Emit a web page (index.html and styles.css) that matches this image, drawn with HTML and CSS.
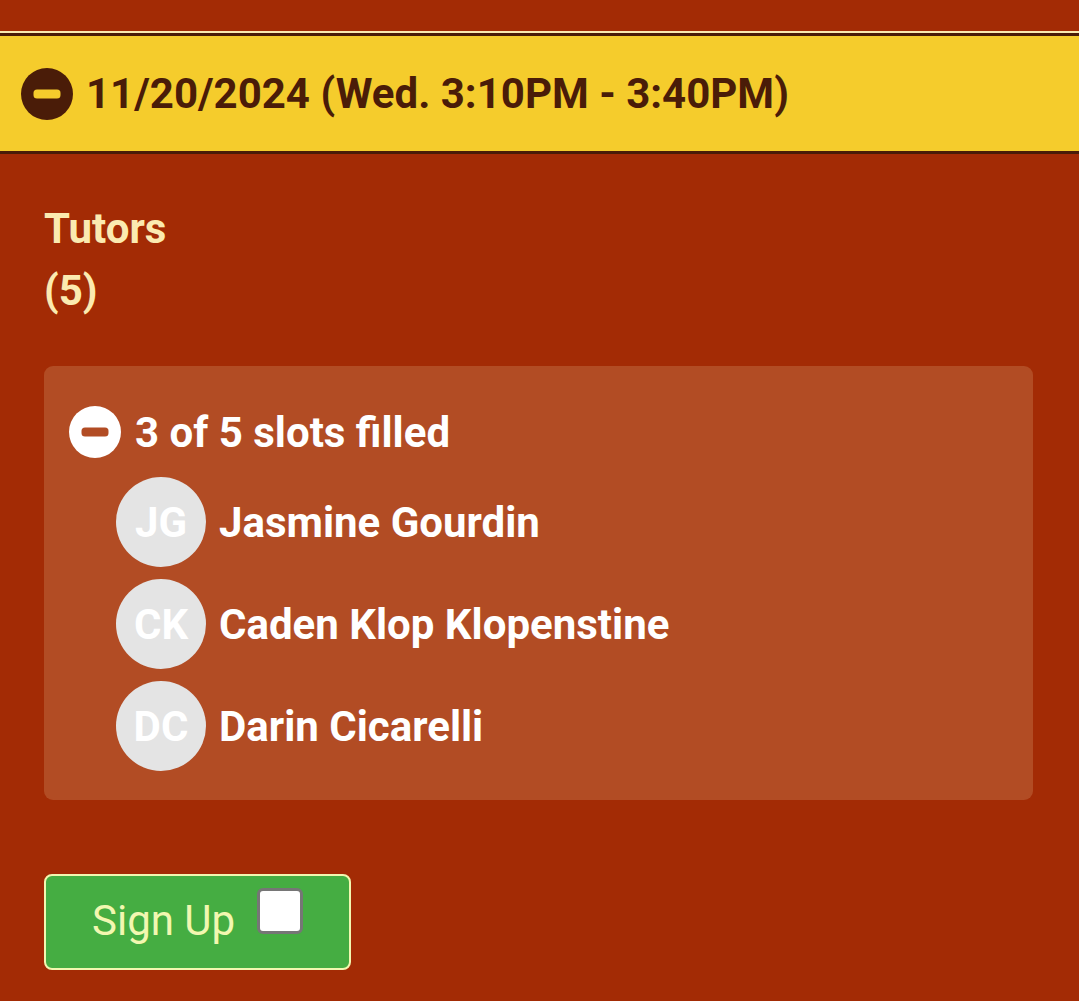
FILE: index.html
```html
<!DOCTYPE html>
<html lang="en">
<head>
  <meta charset="UTF-8" />
  <meta name="viewport" content="width=device-width, initial-scale=1.0"/>
  <title>Tutoring Session</title>
  <link rel="stylesheet" href="styles.css">
</head>
<body>
  <section class="session">
    <!-- Day header -->
    <div class="day-header">
      <svg class="toggle" viewBox="0 0 52 52" width="52" height="52">
        <circle cx="26" cy="26" r="26" fill="#4a1c08"/>
        <rect x="12.5" y="21.5" width="27" height="9" rx="3.5" fill="#f5cc2c"/>
      </svg>
      <h2>11/20/2024 (Wed. 3:10PM - 3:40PM)</h2>
    </div>

    <div class="session-body">
      <div class="role">
        <div class="role-name">Tutors</div>
        <div class="role-count">(5)</div>
      </div>

      <div class="slots">
        <div class="slots-title">
          <svg class="toggle" viewBox="0 0 52 52" width="52" height="52">
            <circle cx="26" cy="26" r="26" fill="#ffffff"/>
            <rect x="12.5" y="21.5" width="27" height="9" rx="3.5" fill="#b24c24"/>
          </svg>
          <span>3 of 5 slots filled</span>
        </div>
        <ul class="people">
          <li><span class="avatar">JG</span>Jasmine Gourdin</li>
          <li><span class="avatar">CK</span>Caden Klop Klopenstine</li>
          <li><span class="avatar">DC</span>Darin Cicarelli</li>
        </ul>
      </div>

      <label class="signup">
        Sign Up
        <input type="checkbox" />
      </label>
    </div>
  </section>
</body>
</html>
```

FILE: styles.css
```css
* {
  box-sizing: border-box;
}

body {
  font-family: Roboto, "Liberation Sans", sans-serif;
  margin: 0;
  background-color: #a32b05;
}

.session {
  padding-top: 33px;
}

.day-header {
  display: flex;
  align-items: center;
  gap: 13px;
  height: 121px;
  padding-left: 21px;
  background-color: #f5cc2c;
  border-top: 3px solid #4a1c08;
  border-bottom: 3px solid #4a1c08;
  box-shadow: 0 -2px 0 #fbeab0;
  color: #4a1c08;
}

.day-header h2 {
  margin: 0;
  font-size: 42px;
  font-weight: 700;
}

.toggle {
  flex-shrink: 0;
  display: block;
}

.session-body {
  padding: 44px 46px 31px 44px;
}

.role {
  color: #fbeab0;
  font-size: 42px;
  font-weight: 700;
  line-height: 62px;
}

.slots {
  margin-top: 44px;
  padding: 40px 25px 29px;
  background-color: #b24c24;
  border-radius: 9px;
  color: #ffffff;
}

.slots-title {
  display: flex;
  align-items: center;
  gap: 14px;
  font-size: 42px;
  font-weight: 700;
}

.people {
  list-style: none;
  margin: 0;
  padding: 19px 0 0 47px;
  display: flex;
  flex-direction: column;
  gap: 12px;
}

.people li {
  display: flex;
  align-items: center;
  gap: 13px;
  font-size: 42px;
  font-weight: 700;
}

.avatar {
  display: flex;
  align-items: center;
  justify-content: center;
  width: 90px;
  height: 90px;
  border-radius: 50%;
  background-color: #e4e4e4;
  color: #ffffff;
  font-size: 42px;
  font-weight: 700;
}

.signup {
  display: inline-flex;
  align-items: center;
  gap: 22px;
  margin-top: 74px;
  height: 96px;
  padding: 0 46px 4px 46px;
  background-color: #45ad42;
  border: 2px solid #f2f7b0;
  border-radius: 8px;
  color: #f2f7b0;
  font-size: 42px;
  cursor: pointer;
}

.signup input {
  appearance: none;
  margin: 0;
  width: 46px;
  height: 46px;
  background-color: #ffffff;
  border: 3px solid #767676;
  border-radius: 6px;
  align-self: flex-start;
  margin-top: 12px;
}
```
